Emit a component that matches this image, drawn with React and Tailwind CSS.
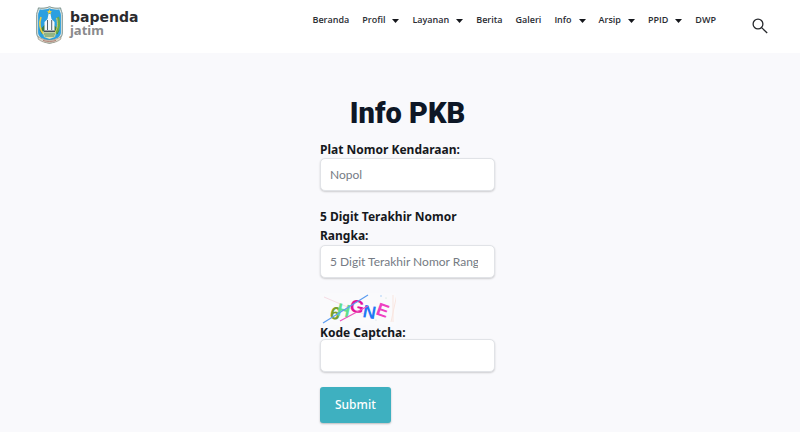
const menu = [
  { label: 'Beranda' },
  { label: 'Profil', dropdown: true },
  { label: 'Layanan', dropdown: true },
  { label: 'Berita' },
  { label: 'Galeri' },
  { label: 'Info', dropdown: true },
  { label: 'Arsip', dropdown: true },
  { label: 'PPID', dropdown: true },
  { label: 'DWP' },
]

const inputClass =
  "block w-full h-[33px] rounded-[5px] border border-[#e1e3e7] bg-white pr-4 pl-[9px] font-['Lato',sans-serif] text-[12px] text-gray-700 shadow-[0_1px_2px_rgba(0,0,0,0.18)] outline-none placeholder:text-[#757b84] focus:border-[#3eb1c1]"

function Crest() {
  return (
    <svg viewBox="0 0 27 38" className="h-[38px] w-[27px]" aria-hidden="true">
      <path d="M13.500 .7C16 2.200 22 2.600 24.600 1.900c.4 3.300 1.700 4.200 1.700 6.600V27c0 5-4.700 8.600-12.800 10.300C5.400 35.600 .7 32 .7 27V8.500c0-2.400 1.300-3.300 1.700-6.600C5 2.600 11 2.200 13.500 .7Z" fill="#e3eae6" stroke="#6d8782" strokeWidth=".9" />
      <path d="M13.500 2.200c3 1.300 7 1.700 9.900 1.300.3 2.400 1.500 3.300 1.500 5.500v17.500c0 4.200-4.300 6.800-11.400 8.100C6.400 33.300 2.100 30.700 2.100 26.500V9c0-2.200 1.200-3.100 1.500-5.500 2.900.4 6.900 0 9.900-1.300Z" fill="#2b9fe0" />
      <path d="m13.500 3 .8 1.900h2l-1.600 1.200.6 2-1.800-1.200L11.700 8l.6-1.900-1.600-1.200h2Z" fill="#f3d13b" />
      <path d="M3.500 24 7 20.500l3-3 3.500-2 3 2.500 3 2.500 4 3.500-2 4H6Z" fill="#3b7c4c" />
      <path d="M12.500 8h2l1 5 3 3v8l1.500 2.500H7L8.500 24v-8l3-3Z" fill="#f5f8fa" />
      <path d="M11.500 14v10M15.700 14v10" stroke="#3f4f5b" strokeWidth=".9" />
      <path d="M8 24.500h11v1.500H8z" fill="#46515a" />
      <path d="M5 11c-2 6-1.500 12 2.500 17" stroke="#e8cf48" strokeWidth="1.600" fill="none" />
      <path d="M22 11c2 6 1.500 12-2.500 17" stroke="#67ab4d" strokeWidth="2" fill="none" />
      <path d="M20.600 12c1.500 6 1 11-2 15" stroke="#e8cf48" strokeWidth="1" fill="none" />
      <path d="M7 26.500h13l-1 4.500-5.500 2L8 31Z" fill="#dfe3b0" />
      <path d="M8 28h11M8.500 30h10" stroke="#3b7c4c" strokeWidth=".9" />
      <path d="M2.500 30.500c3 2.800 7 3.500 11 3.500s8-.7 11-3.500l.5 2.500c-3 2.500-7 4-11.500 4S5 35.500 2 33Z" fill="#dcd8cb" stroke="#7c7969" strokeWidth=".5" />
      <path d="M7 34.500c4 1.200 9 1.200 13 0" stroke="#9a5148" strokeWidth=".7" fill="none" />
    </svg>
  )
}

function Logo() {
  return (
    <a href="#" className="flex items-start gap-[7px]">
      <Crest />
      <span className="flex flex-col pt-[3px]">
        <span className="font-['DejaVu_Sans',sans-serif] text-[14px] leading-4 font-bold text-[#2b2b2f]">bapenda</span>
        <span className="font-['Noto_Sans',sans-serif] text-[13px] leading-[11px] font-bold text-[#8a8a8c]">jatim</span>
      </span>
    </a>
  )
}

function Captcha() {
  return (
    <svg viewBox="0 0 76 32" className="h-8 w-[76px]" role="img" aria-label="Captcha">
      <rect width="76" height="32" fill="#fafafc" />
      <path d="M4 4 44 21" stroke="#f6dce4" strokeWidth="1" />
      <path d="M73 2v27M77 1l-6 28" stroke="#f9e6e0" strokeWidth="1" />
      <g fontFamily="Liberation Sans, sans-serif" fontWeight="bold" fontSize="18">
        <text transform="translate(9 25) rotate(14)" fill="#7aa02c">6</text>
        <text transform="translate(16 22) rotate(12)" fill="#5fe08f">H</text>
        <text transform="translate(29 18) rotate(12)" fill="#e3129c">G</text>
        <text transform="translate(42 24) rotate(10)" fill="#2277f5">N</text>
        <text transform="translate(55 21) rotate(20)" fill="#ee3fc1">E</text>
      </g>
      <path d="M3 30 48 2" stroke="#5b9cf0" strokeWidth="1.200" />
      <path d="M20 28 48 13" stroke="#ea55bd" strokeWidth="1.200" />
      <circle cx="61" cy="3" r=".7" fill="#8fc0f5" />
      <circle cx="56" cy="27" r=".6" fill="#c9d4dd" />
      <circle cx="66" cy="5" r=".5" fill="#b6d8c8" />
    </svg>
  )
}

function Header() {
  return (
    <header className="flex h-[53px] items-start justify-between bg-white pt-[6px] pr-8 pl-9">
      <Logo />
      <div className="flex items-start gap-9">
        <nav className="flex gap-[13px] pt-2 font-['Open_Sans',sans-serif] text-[9px] leading-3 font-semibold text-[#2a2d33]">
          {menu.map((item) => (
            <a key={item.label} href="#" className="flex items-center gap-[7px]">
              {item.label}
              {item.dropdown && (
                <svg viewBox="0 0 7 4" className="mt-px h-1 w-[7px]" aria-hidden="true">
                  <path d="M0 0h7L3.500 4Z" fill="#15171c" />
                </svg>
              )}
            </a>
          ))}
        </nav>
        <button type="button" aria-label="Search" className="mt-3 cursor-pointer">
          <svg viewBox="0 0 16 16" className="size-4" fill="none" stroke="#26282c" strokeWidth="1.300">
            <circle cx="6" cy="6" r="4.900" />
            <path d="m9.600 9.600 5.600 5.400" />
          </svg>
        </button>
      </div>
    </header>
  )
}

function App() {
  return (
    <div className="min-h-screen bg-[#f9f9fc] font-['Noto_Sans',sans-serif]">
      <Header />

      <main className="flex flex-col items-center pt-[42px] pb-[9px] pl-[15px]">
        <h1 className="font-['Roboto',sans-serif] text-[29px] leading-9 font-black text-[#0e1726]">Info PKB</h1>

        <form className="mt-[9px] w-[175px]" onSubmit={(e) => e.preventDefault()}>
          <label htmlFor="nopol" className="block h-[18px] text-[12px] leading-[19px] font-bold text-[#16181d]">
            Plat Nomor Kendaraan:
          </label>
          <input id="nopol" type="text" placeholder="Nopol" className={inputClass} />

          <label htmlFor="rangka" className="mt-4 block text-[12px] leading-[19px] font-bold text-[#16181d]">
            5 Digit Terakhir Nomor Rangka:
          </label>
          <input id="rangka" type="text" placeholder="5 Digit Terakhir Nomor Rangka" className={inputClass} />

          <div className="mt-[15px] flex">
            <Captcha />
          </div>
          <label htmlFor="captcha" className="block h-[14px] text-[12px] leading-[15px] font-bold text-[#16181d]">
            Kode Captcha:
          </label>
          <input id="captcha" type="text" className={inputClass} />

          <button
            type="submit"
            className="mt-[15px] h-9 cursor-pointer rounded-[3px] bg-[#3eb0c0] px-[15px] text-[12px] font-medium text-white shadow-[0_1px_2px_rgba(0,0,0,0.25)]"
          >
            Submit
          </button>
        </form>
      </main>
    </div>
  )
}

export default App
